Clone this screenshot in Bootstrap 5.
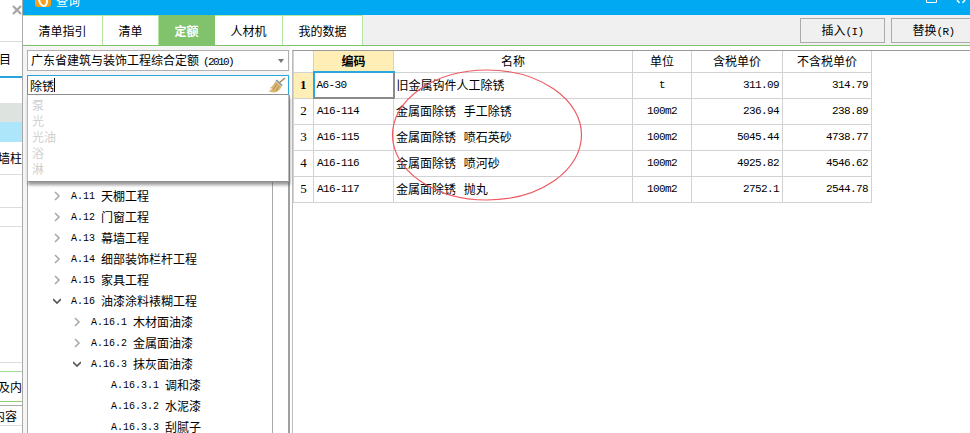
<!DOCTYPE html>
<html lang="zh-CN">
<head>
  <meta charset="UTF-8">
  <title>查询</title>
  <meta name="viewport" content="width=device-width, initial-scale=1.0">
  <link rel="stylesheet" href="https://cdn.jsdelivr.net/npm/bootstrap@5.3.0/dist/css/bootstrap.min.css">
  <style>
    html, body { height: 433px; overflow: hidden; }
    body {
      background: #fff;
      color: #000;
      font-family: "Liberation Mono", "Noto Sans CJK SC", monospace;
      font-size: 12px;
      line-height: 16px;
    }
    .cjk { font-family: "Noto Sans CJK SC", sans-serif; font-size: 12px; }
    .lat { font-family: "Liberation Mono", monospace; font-size: 10px; }
    .stage { position: relative; width: 970px; height: 433px; overflow: hidden; }

    /* window behind the dialog */
    .behind { width: 23px; border-right: 1px solid #a9a9a9; overflow: hidden; }
    .bh-row { display: flex; justify-content: flex-end; align-items: center; border-bottom: 1px solid #dcdcdc; white-space: nowrap; font-family: "Noto Sans CJK SC", sans-serif; }
    .bh-close { height: 42px; align-items: flex-start; padding: 5px 0 0; }
    .bh-item { height: 36px; border-bottom: 2px solid #27a5dc; padding: 0 11px 0 0; }
    .bh-blank { height: 25px; border: 0; }
    .bh-grey { height: 19px; background: #dde4df; border: 0; }
    .bh-sel { height: 20px; background: #ade6fb; border: 0; }
    .bh-wall { height: 33px; }
    .bh-a { height: 33px; }
    .bh-b { height: 19px; }
    .bh-c { height: 136px; }
    .bh-d { height: 9px; border-bottom: 1px solid #a5dc8c; }
    .bh-e { height: 30px; border-bottom: 1px solid #8fcf78; }
    .bh-f { height: 4px; border-bottom: 1px solid #a9a9a9; }
    .bh-g { height: 20px; padding-right: 5px; }

    /* title bar, cut off by the top of the picture */
    .dlg { width: 947px; }
    .titlebar { height: 15px; background: #00a9f1; color: #fff; overflow: hidden; padding-left: 12px; }
    .app-ico { width: 16px; height: 16px; margin-top: -9px; background: #f6a01e; border-radius: 3px; }
    .title-txt { margin: -7px 0 0 5px; font-size: 12px; line-height: 16px; font-family: "Noto Sans CJK SC", sans-serif; }
    .win-btns { gap: 18px; padding-right: 3px; }

    /* tabs */
    .tabbar { height: 31px; background: #f0f0f0; border-bottom: 1px solid #80c36c; }
    .qtab { background: #fff; border: 1px solid #b6e6a2; border-bottom: 0; border-left: 0; border-radius: 0; height: 30px; padding: 1px 0 0; color: #000; font-family: "Noto Sans CJK SC", sans-serif; font-size: 12px; }
    .qtab.on { background: #80c36c; color: #fff; font-weight: 700; border-color: #80c36c; }
    .w1 { width: 80px; } .w2 { width: 56px; } .w3 { width: 56px; } .w4 { width: 68px; } .w5 { width: 80px; }
    .qbtn { width: 85px; height: 25px; margin-top: 3px; background: #f0f0f0; border: 1px solid #ababab; border-radius: 0; font-size: 12px; color: #000; padding: 0; }
    .qbtn .lat { font-size: 11px; letter-spacing: -.6px; }
    .qbtn-wide { width: 85px; margin: 3px -6px 0 6px; }

    /* left panel */
    .main { height: 387px; }
    .leftp { width: 267px; position: relative; background: #f5f5f5; padding: 4px 1px 0 4px; }
    .lib-sel { height: 21px; background: #fff; border: 1px solid #b0b0b0; padding: 0 4px 0 3px; }
    .lib-year { font-size: 11px; letter-spacing: -1.6px; margin-left: 4px; }
    .tri { width: 0; height: 0; border: 3.500px solid transparent; border-top: 4px solid #777; margin-top: 4px; }
    .sbox { height: 20px; margin-top: 4px; background: #fff; border: 1px solid #2ba7df; border-bottom-color: #8f8f8f; padding-right: 2px; }
    .sbox input { border: 0; outline: 0; padding: 0 0 0 2px; min-width: 0; width: 26px; height: 18px; font-family: "Noto Sans CJK SC", sans-serif; font-size: 12px; color: #000; background: transparent; }
    .caret-mark { width: 1px; height: 14px; background: #000; }
    .tree-wrap { height: 342px; margin-right: -1px; background: #fff; border-left: 1px solid #a9a9a9; border-right: 2px solid #a0a0a0; }
    .tree { padding-top: 90px; width: 245px; border-right: 1px solid #a9a9a9; overflow: hidden; }
    .node { height: 21px; white-space: nowrap; color: #000; }
    .node svg { width: 8px; height: 10px; margin-right: 10px; flex: none; }
    .l1 { padding-left: 25px; } .l2 { padding-left: 45px; } .l3 { padding-left: 83px; }
    .node .lat { margin: 3px 6px 0 0; }
    .hints { position: absolute; left: 4px; right: 1px; top: 49px; height: 87px; background: #fff; border: 1px solid #b8b8b8; border-top: 0; border-bottom-color: #8f8f8f; box-shadow: 1px 3px 3px rgba(70,70,70,.55); padding: 2px 0 0 4px; color: #cfcfcf; font-family: "Noto Sans CJK SC", sans-serif; }

    /* right table */
    .rightp { padding-left: 2px; background: #fff; }
    .grid-top { height: 383px; border-top: 1px solid #9a9a9a; border-left: 1px solid #bdbdbd; margin-top: 4px; }
    .qgrid { width: 578px; table-layout: fixed; border-collapse: collapse; margin: 0; }
    .qgrid th, .qgrid td { border: 1px solid #d2d2d2; padding: 0 3px; height: 26px; font-weight: 400; vertical-align: middle; white-space: nowrap; overflow: hidden; }
    .qgrid thead th { height: 21px; text-align: center; font-family: "Noto Sans CJK SC", sans-serif; border-top: 0; }
    .qgrid .lat2 { font-family: "Liberation Mono", monospace; font-size: 11px; letter-spacing: -.6px; }
    .qgrid .num { text-align: right; }
    .qgrid .ctr { text-align: center; }
    .qgrid .rh { text-align: center; padding: 0; font-family: "Liberation Serif", serif; font-size: 13px; }
    .qgrid .cjk-c { font-family: "Noto Sans CJK SC", sans-serif; word-spacing: 5px; padding-left: 2px; }
    .qgrid th.hot { background: #ffeeb6; font-weight: 700; border-bottom: 2px solid #2ba7df; }
    .qgrid td.hot { background: #ffeeb6; font-weight: 700; }
    .qgrid td.cur { border: 2px solid #8a8a8a; border-left-color: #2ba7df; border-top-color: #2ba7df; padding-left: 2px; }

    .ring { position: absolute; left: 390px; top: 68px; width: 194px; height: 134px; pointer-events: none; }
  </style>
</head>
<body>
  <div class="stage d-flex">
    <div class="behind flex-shrink-0">
      <div class="bh-row bh-close">
        <svg width="10" height="10" viewBox="0 0 10 10"><path d="M1 1l8 8M9 1l-8 8" stroke="#a8a8a8" stroke-width="2.400"/></svg>
      </div>
      <div class="bh-row bh-item">项目</div>
      <div class="bh-row bh-blank"></div>
      <div class="bh-row bh-grey"></div>
      <div class="bh-row bh-sel"></div>
      <div class="bh-row bh-wall">墙柱</div>
      <div class="bh-row bh-a"></div>
      <div class="bh-row bh-b"></div>
      <div class="bh-row bh-c"></div>
      <div class="bh-row bh-d"></div>
      <div class="bh-row bh-e">及内</div>
      <div class="bh-row bh-f"></div>
      <div class="bh-row bh-g">内容</div>
    </div>

    <div class="dlg d-flex flex-column">
      <div class="titlebar d-flex">
        <div class="app-ico d-flex justify-content-center">
          <svg width="10" height="7" viewBox="0 0 10 7" class="align-self-end"><path d="M1 0c1 4 3 6 5 6s3-3 3-6" fill="none" stroke="#fff" stroke-width="2"/></svg>
        </div>
        <div class="title-txt">查询</div>
        <div class="win-btns d-flex ms-auto">
          <svg width="11" height="3" viewBox="0 0 11 3"><path d="M.5 0v2.500h10V0" fill="none" stroke="#fff"/></svg>
          <svg width="12" height="3" viewBox="0 0 12 3"><path d="M2 0l2.500 3M10 0L7.500 3" fill="none" stroke="#fff" stroke-width="1.500"/></svg>
        </div>
      </div>

      <div class="tabbar d-flex">
        <button type="button" class="btn qtab w1">清单指引</button>
        <button type="button" class="btn qtab w2">清单</button>
        <button type="button" class="btn qtab w3 on">定额</button>
        <button type="button" class="btn qtab w4">人材机</button>
        <button type="button" class="btn qtab w5">我的数据</button>
        <button type="button" class="btn qbtn ms-auto"><span class="cjk">插入</span><span class="lat">(I)</span></button>
        <button type="button" class="btn qbtn qbtn-wide"><span class="cjk">替换</span><span class="lat">(R)</span></button>
      </div>

      <div class="main d-flex">
        <div class="leftp flex-shrink-0">
          <div class="lib-sel d-flex align-items-center justify-content-between">
            <span class="cjk">广东省建筑与装饰工程综合定额<span class="lat lib-year">(2010)</span></span>
            <span class="tri"></span>
          </div>
          <div class="sbox d-flex align-items-center">
            <input type="text" value="除锈" size="4">
            <span class="caret-mark"></span>
            <svg class="ms-auto" width="18" height="16" viewBox="0 0 18 16">
              <path d="M11 6L17 1" stroke="#a98a58" stroke-width="1.600"/>
              <path d="M7.500 3.500l1.500-1 5.500 5.500-1 1.500z" fill="#8d9aa6"/>
              <path d="M7.500 4L13.500 9.500C12.500 12.500 9.500 15 7 15.500 5 15.500 2 15 .5 14 2.500 13.500 4 12 4 11 3 11.500 2 11.500 1.500 11 4 10 6 7 7.500 4z" fill="#dcb877"/>
              <path d="M9 7L5 13M11 9l-3 5" stroke="#b08c50"/>
            </svg>
          </div>
          <div class="d-flex tree-wrap">
            <div class="tree flex-shrink-0">
              <div class="node d-flex align-items-center l1"><svg viewBox="0 0 8 10"><path d="M2 1l4 4-4 4" fill="none" stroke="#aaa" stroke-width="1.600"/></svg><span class="lat">A.11</span><span class="cjk">天棚工程</span></div>
              <div class="node d-flex align-items-center l1"><svg viewBox="0 0 8 10"><path d="M2 1l4 4-4 4" fill="none" stroke="#aaa" stroke-width="1.600"/></svg><span class="lat">A.12</span><span class="cjk">门窗工程</span></div>
              <div class="node d-flex align-items-center l1"><svg viewBox="0 0 8 10"><path d="M2 1l4 4-4 4" fill="none" stroke="#aaa" stroke-width="1.600"/></svg><span class="lat">A.13</span><span class="cjk">幕墙工程</span></div>
              <div class="node d-flex align-items-center l1"><svg viewBox="0 0 8 10"><path d="M2 1l4 4-4 4" fill="none" stroke="#aaa" stroke-width="1.600"/></svg><span class="lat">A.14</span><span class="cjk">细部装饰栏杆工程</span></div>
              <div class="node d-flex align-items-center l1"><svg viewBox="0 0 8 10"><path d="M2 1l4 4-4 4" fill="none" stroke="#aaa" stroke-width="1.600"/></svg><span class="lat">A.15</span><span class="cjk">家具工程</span></div>
              <div class="node d-flex align-items-center l1"><svg viewBox="0 0 8 10"><path d="M0 3l4 4 4-4" fill="none" stroke="#555" stroke-width="1.600"/></svg><span class="lat">A.16</span><span class="cjk">油漆涂料裱糊工程</span></div>
              <div class="node d-flex align-items-center l2"><svg viewBox="0 0 8 10"><path d="M2 1l4 4-4 4" fill="none" stroke="#aaa" stroke-width="1.600"/></svg><span class="lat">A.16.1</span><span class="cjk">木材面油漆</span></div>
              <div class="node d-flex align-items-center l2"><svg viewBox="0 0 8 10"><path d="M2 1l4 4-4 4" fill="none" stroke="#aaa" stroke-width="1.600"/></svg><span class="lat">A.16.2</span><span class="cjk">金属面油漆</span></div>
              <div class="node d-flex align-items-center l2"><svg viewBox="0 0 8 10"><path d="M0 3l4 4 4-4" fill="none" stroke="#555" stroke-width="1.600"/></svg><span class="lat">A.16.3</span><span class="cjk">抹灰面油漆</span></div>
              <div class="node d-flex align-items-center l3"><span class="lat">A.16.3.1</span><span class="cjk">调和漆</span></div>
              <div class="node d-flex align-items-center l3"><span class="lat">A.16.3.2</span><span class="cjk">水泥漆</span></div>
              <div class="node d-flex align-items-center l3"><span class="lat">A.16.3.3</span><span class="cjk">刮腻子</span></div>
            </div>
          </div>
          <div class="hints">
            <div>泵</div>
            <div>光</div>
            <div>光油</div>
            <div>浴</div>
            <div>淋</div>
          </div>
        </div>

        <div class="rightp flex-grow-1">
          <div class="grid-top">
            <table class="qgrid">
              <colgroup>
                <col style="width:20px"><col style="width:80px"><col style="width:239px"><col style="width:59px"><col style="width:91px"><col style="width:89px">
              </colgroup>
              <thead>
                <tr><th></th><th class="hot">编码</th><th>名称</th><th>单位</th><th>含税单价</th><th>不含税单价</th></tr>
              </thead>
              <tbody>
                <tr><td class="rh hot">1</td><td class="lat2 cur">A6-30</td><td class="cjk-c">旧金属钩件人工除锈</td><td class="lat2 ctr">t</td><td class="lat2 num">311.09</td><td class="lat2 num">314.79</td></tr>
                <tr><td class="rh">2</td><td class="lat2">A16-114</td><td class="cjk-c">金属面除锈 手工除锈</td><td class="lat2 ctr">100m2</td><td class="lat2 num">236.94</td><td class="lat2 num">238.89</td></tr>
                <tr><td class="rh">3</td><td class="lat2">A16-115</td><td class="cjk-c">金属面除锈 喷石英砂</td><td class="lat2 ctr">100m2</td><td class="lat2 num">5045.44</td><td class="lat2 num">4738.77</td></tr>
                <tr><td class="rh">4</td><td class="lat2">A16-116</td><td class="cjk-c">金属面除锈 喷河砂</td><td class="lat2 ctr">100m2</td><td class="lat2 num">4925.82</td><td class="lat2 num">4546.62</td></tr>
                <tr><td class="rh">5</td><td class="lat2">A16-117</td><td class="cjk-c">金属面除锈 抛丸</td><td class="lat2 ctr">100m2</td><td class="lat2 num">2752.1</td><td class="lat2 num">2544.78</td></tr>
              </tbody>
            </table>
          </div>
        </div>
      </div>
    </div>

    <svg class="ring" viewBox="0 0 194 134">
      <ellipse cx="97" cy="67" rx="94.500" ry="65" fill="none" stroke="#ee5a62" stroke-width="1.200"/>
    </svg>
  </div>
  <script src="https://cdn.jsdelivr.net/npm/bootstrap@5.3.0/dist/js/bootstrap.bundle.min.js"></script>
</body>
</html>
